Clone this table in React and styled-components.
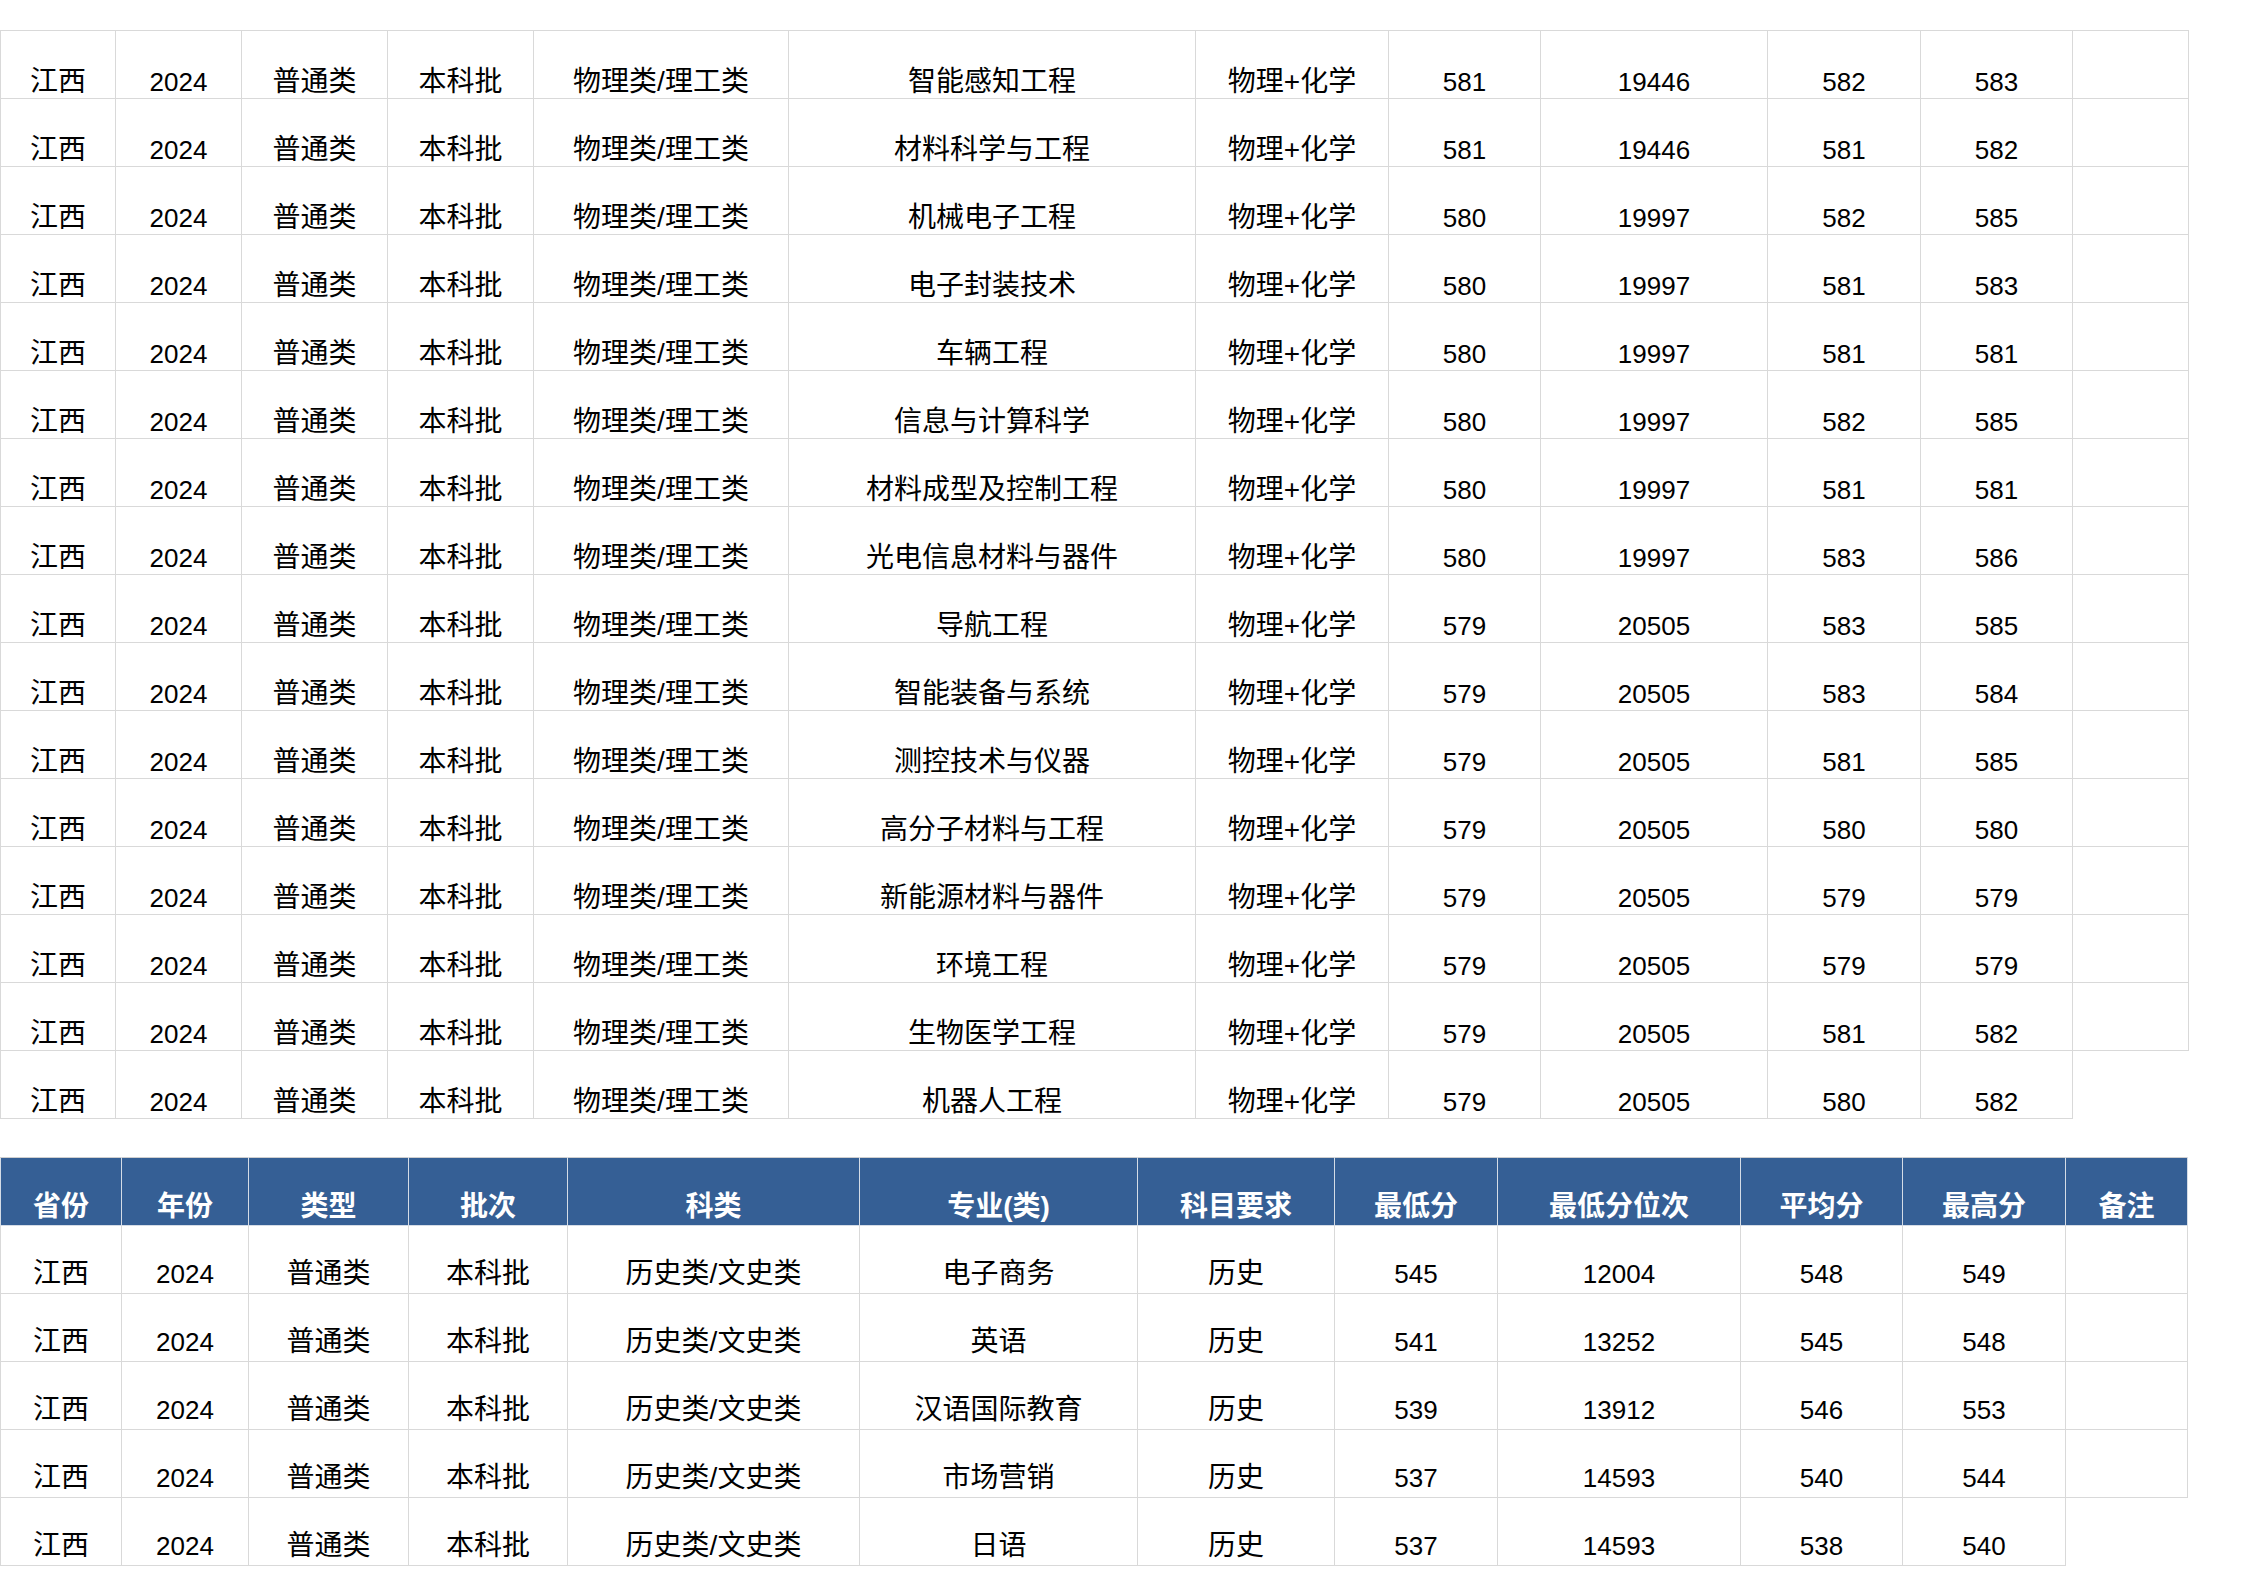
import React from 'react';
import styled, { createGlobalStyle } from 'styled-components';

const GlobalStyle = createGlobalStyle`
    html, body {
        margin: 0;
        padding: 0;
        background: #ffffff;
    }
    body {
        font-family: "Liberation Sans", "Noto Sans CJK SC", sans-serif;
        color: #000000;
    }
`;

const Page = styled.div`
    padding-top: 30px;
    display: flex;
    flex-direction: column;
    gap: 38px;
    width: 2245px;
`;

const Table = styled.table`
    border-collapse: collapse;
    table-layout: fixed;
    width: ${(p) => p.$width}px;
`;

const HeadCell = styled.th`
    height: 65px;
    padding: 0 0 2px 0;
    background: #355f95;
    color: #ffffff;
    font-size: 28px;
    font-weight: bold;
    line-height: 32px;
    text-align: center;
    vertical-align: bottom;
    white-space: nowrap;
    border: 1px solid #d5dce6;
    border-top-color: #cfcfcf;
`;

const Cell = styled.td`
    height: ${(p) => 67 - p.$pad}px;
    padding: 0 0 ${(p) => p.$pad}px 0;
    font-size: ${(p) => (p.$num ? 26 : 28)}px;
    line-height: 32px;
    text-align: center;
    vertical-align: bottom;
    white-space: nowrap;
    border: 1px solid #d9d9d9;

    &.open {
        border-right: none;
        border-bottom: none;
    }
`;

const topCols = [115, 126, 146, 146, 255, 407, 193, 152, 227, 153, 152, 116];
const bottomCols = [121, 127, 160, 159, 292, 278, 197, 163, 243, 162, 163, 122];

const headers = ['省份', '年份', '类型', '批次', '科类', '专业(类)', '科目要求', '最低分', '最低分位次', '平均分', '最高分', '备注'];

const physics = [
    ['智能感知工程', 581, 19446, 582, 583],
    ['材料科学与工程', 581, 19446, 581, 582],
    ['机械电子工程', 580, 19997, 582, 585],
    ['电子封装技术', 580, 19997, 581, 583],
    ['车辆工程', 580, 19997, 581, 581],
    ['信息与计算科学', 580, 19997, 582, 585],
    ['材料成型及控制工程', 580, 19997, 581, 581],
    ['光电信息材料与器件', 580, 19997, 583, 586],
    ['导航工程', 579, 20505, 583, 585],
    ['智能装备与系统', 579, 20505, 583, 584],
    ['测控技术与仪器', 579, 20505, 581, 585],
    ['高分子材料与工程', 579, 20505, 580, 580],
    ['新能源材料与器件', 579, 20505, 579, 579],
    ['环境工程', 579, 20505, 579, 579],
    ['生物医学工程', 579, 20505, 581, 582],
    ['机器人工程', 579, 20505, 580, 582],
];

const history = [
    ['电子商务', 545, 12004, 548, 549],
    ['英语', 541, 13252, 545, 548],
    ['汉语国际教育', 539, 13912, 546, 553],
    ['市场营销', 537, 14593, 540, 544],
    ['日语', 537, 14593, 538, 540],
];

const sum = (cols) => cols.reduce((a, b) => a + b, 0);

const Cols = ({ widths }) => (
    <colgroup>
        {widths.map((w, i) => (
            <col key={i} style={{ width: w }} />
        ))}
    </colgroup>
);

const DataRows = ({ rows, track, subject, pad }) =>
    rows.map((r, i) => {
        const last = i === rows.length - 1;
        return (
            <tr key={i}>
                <Cell $pad={pad}>江西</Cell>
                <Cell $pad={pad} $num>2024</Cell>
                <Cell $pad={pad}>普通类</Cell>
                <Cell $pad={pad}>本科批</Cell>
                <Cell $pad={pad}>{track}</Cell>
                <Cell $pad={pad}>{r[0]}</Cell>
                <Cell $pad={pad}>{subject}</Cell>
                <Cell $pad={pad} $num>{r[1]}</Cell>
                <Cell $pad={pad} $num>{r[2]}</Cell>
                <Cell $pad={pad} $num>{r[3]}</Cell>
                <Cell $pad={pad} $num>{r[4]}</Cell>
                <Cell $pad={pad} className={last ? 'open' : undefined}></Cell>
            </tr>
        );
    });

const App = () => {
    return (
        <>
            <GlobalStyle />
            <Page>
                <Table $width={sum(topCols)}>
                    <Cols widths={topCols} />
                    <tbody>
                        <DataRows rows={physics} track="物理类/理工类" subject="物理+化学" pad={0} />
                    </tbody>
                </Table>
                <Table $width={sum(bottomCols)}>
                    <Cols widths={bottomCols} />
                    <thead>
                        <tr>
                            {headers.map((h) => (
                                <HeadCell key={h}>{h}</HeadCell>
                            ))}
                        </tr>
                    </thead>
                    <tbody>
                        <DataRows rows={history} track="历史类/文史类" subject="历史" pad={3} />
                    </tbody>
                </Table>
            </Page>
        </>
    );
};

export default App;
